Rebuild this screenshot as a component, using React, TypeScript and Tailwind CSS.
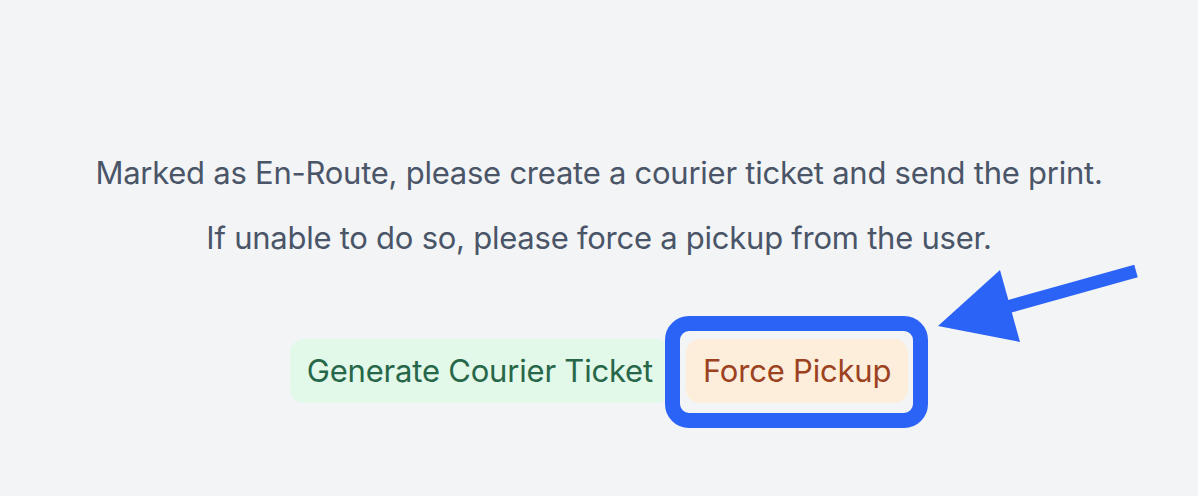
export default function App() {
  return (
    <div
      className="relative w-[1198px] h-[496px] overflow-hidden bg-[#f3f4f6] text-[#4a5568]"
      style={{ fontFamily: 'Inter, "Noto Sans", sans-serif' }}
    >
      <div className="flex flex-col items-center pt-[149px]">
        <p className="text-[31px] leading-[48px] tracking-[-0.25px]">
          Marked as En-Route, please create a courier ticket and send the print.
        </p>
        <p className="mt-[17px] text-[31px] leading-[48px] tracking-[-0.25px]">
          If unable to do so, please force a pickup from the user.
        </p>

        <div className="mt-[77px] flex items-center gap-4">
          <button className="h-16 px-[17px] rounded-[14px] bg-[#e2f8e8] text-[#276749] text-[31px] tracking-[-0.2px]">
            Generate Courier Ticket
          </button>
          <div className="relative">
            <button className="h-16 px-[17px] rounded-[14px] bg-[#fdeedc] text-[#9c4221] text-[31px] tracking-[-0.2px]">
              Force Pickup
            </button>
            {/* highlight annotation */}
            <div className="absolute -left-[21px] -top-[23px] -right-[20px] -bottom-[25px] rounded-[24px] border-[15px] border-[#2a63f6]" />
          </div>
        </div>
      </div>

      {/* arrow annotation */}
      <svg
        className="absolute left-0 top-0"
        width="1198"
        height="496"
        viewBox="0 0 1198 496"
      >
        <line x1="1136" y1="271" x2="1000" y2="309" stroke="#2a63f6" strokeWidth="13" />
        <polygon points="938,326 1000,270 1020,342" fill="#2a63f6" />
      </svg>
    </div>
  )
}
